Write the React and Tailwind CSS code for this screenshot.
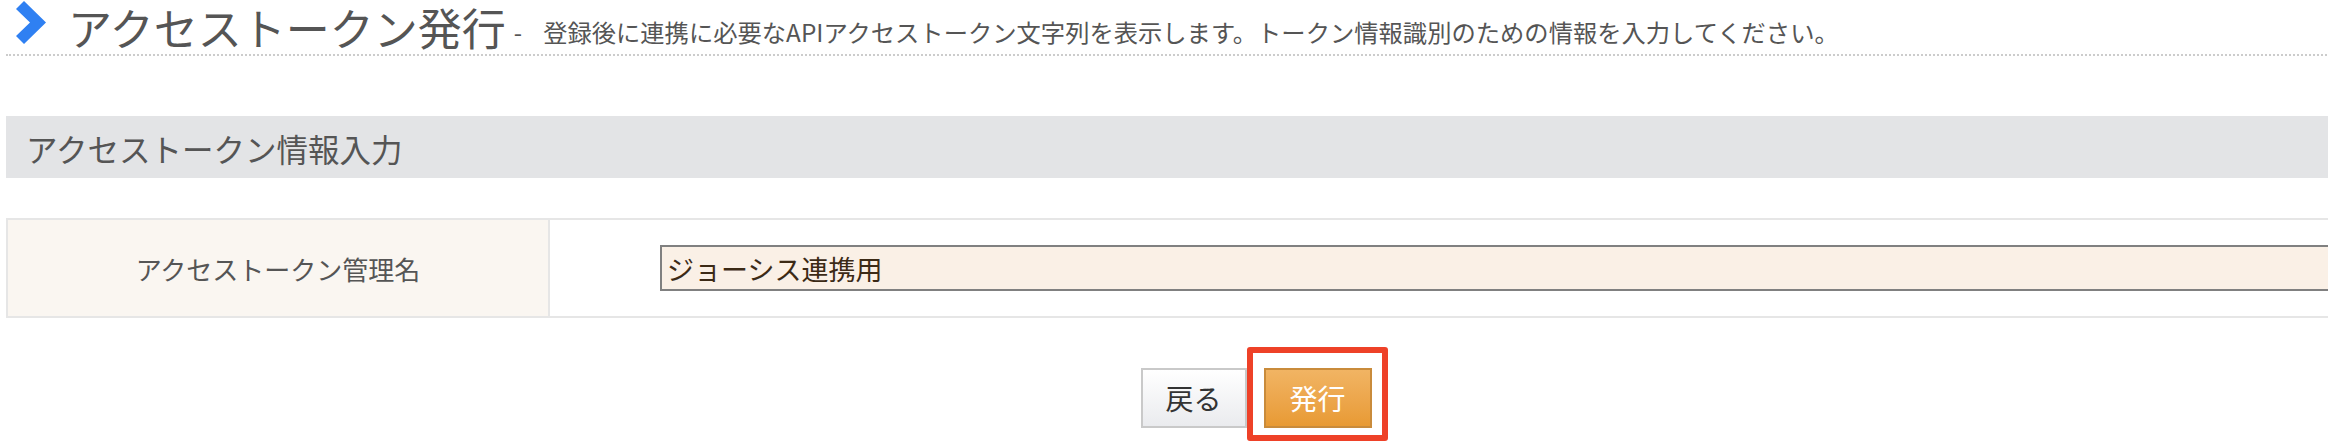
export default function App() {
  const font = { fontFamily: '"Noto Sans CJK JP", "Noto Sans", sans-serif' };
  return (
    <div className="w-[2328px] h-[448px] bg-white overflow-hidden relative" style={font}>
      <div className="w-[2500px] ml-[6px]">
        {/* Page title */}
        <div className="h-[56px] flex items-end border-b-2 border-dotted border-[#cccccc]">
          <div className="flex items-end h-full">
            <svg width="31" height="43" viewBox="0 0 31 43" className="ml-[10px] mb-[10px] shrink-0">
              <polygon points="8,0 30,21.5 8,43 0,35 14,21.5 0,8" fill="#2f80f2" />
            </svg>
            <span className="ml-[21px] text-[44px] leading-[54px] text-[#555555] whitespace-nowrap">アクセストークン発行</span>
            <span className="ml-[8px] text-[24px] leading-[30px] mb-[7px] text-[#555555] whitespace-nowrap">-</span>
            <span className="ml-[21px] text-[24.3px] leading-[30px] mb-[7px] text-[#555555] whitespace-nowrap">登録後に連携に必要なAPIアクセストークン文字列を表示します。トークン情報識別のための情報を入力してください。</span>
          </div>
        </div>

        {/* Section header */}
        <div className="mt-[60px] h-[62px] bg-[#e3e4e6] flex items-center pl-[20px]">
          <span className="text-[31.5px] text-[#555555] leading-none mt-[3px]">アクセストークン情報入力</span>
        </div>

        {/* Form table */}
        <div className="mt-[40px] flex border-2 border-[#e6e6e6] h-[100px]">
          <div className="w-[542px] shrink-0 bg-[#faf6f1] border-r-2 border-[#e6e6e6] flex items-center justify-center">
            <span className="text-[26px] text-[#555555]">アクセストークン管理名</span>
          </div>
          <div className="flex-1 flex items-center pl-[110px]">
            <div className="w-[1830px] h-[46px] border-2 border-[#808080] bg-[#faf0e6] flex items-center pl-[5px]">
              <span className="text-[27px] text-[#3c2a16] leading-none">ジョーシス連携用</span>
            </div>
          </div>
        </div>

        {/* Buttons */}
        <div className="mt-[50px] flex justify-center items-start gap-[17px]">
          <button className="w-[106px] h-[60px] border-2 border-[#c9c9c9] bg-gradient-to-b from-[#ffffff] to-[#eaebee] text-[28px] text-[#333333] flex items-center justify-center">
            戻る
          </button>
          <div className="relative">
            <button className="w-[108px] h-[60px] border-2 border-[#c98b3b] bg-gradient-to-b from-[#f1b463] to-[#e89a33] text-[28px] text-white flex items-center justify-center">
              発行
            </button>
            <div className="absolute left-[-17px] top-[-21px] w-[141px] h-[94px] border-[6px] border-[#ee4128] rounded-[3px] pointer-events-none"></div>
          </div>
        </div>
      </div>
    </div>
  );
}
